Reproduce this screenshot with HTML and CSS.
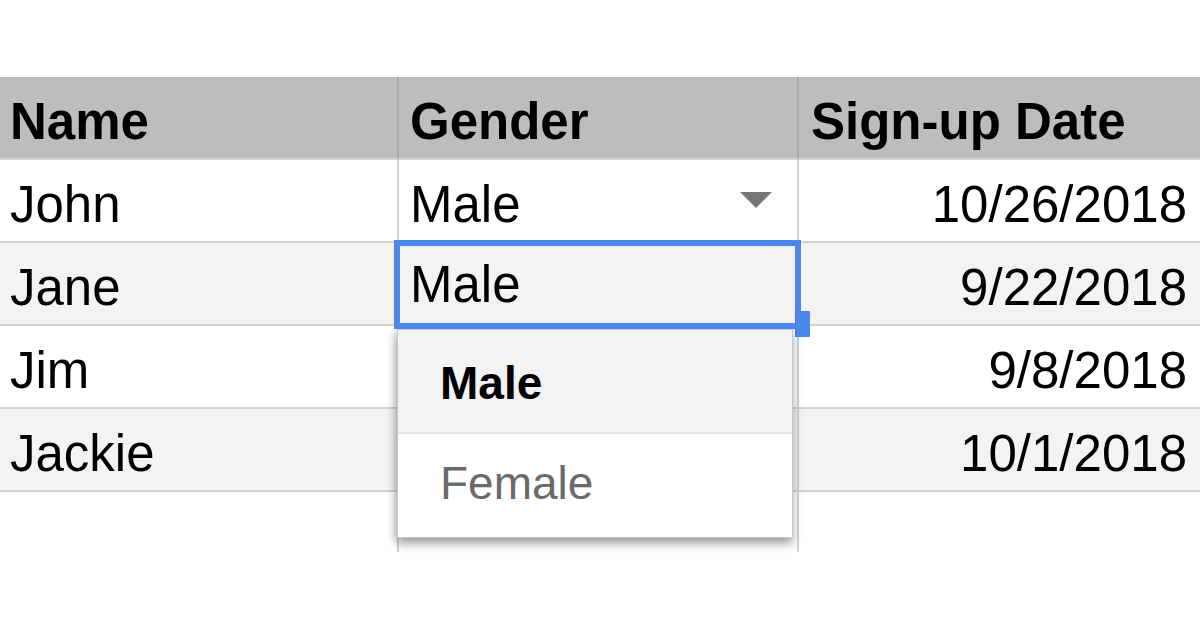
FILE: index.html
```html
<!DOCTYPE html>
<html>
<head>
<meta charset="utf-8">
<link rel="stylesheet" href="styles.css">
</head>
<body>
<div class="page">
  <div class="sheet">
    <div class="cell head c1">Name</div>
    <div class="cell head c2">Gender</div>
    <div class="cell head c3">Sign-up Date</div>

    <div class="cell c1">John</div>
    <div class="cell c2 dd"><span>Male</span><span class="arrow"></span></div>
    <div class="cell c3 num">10/26/2018</div>

    <div class="cell alt c1">Jane</div>
    <div class="cell alt c2 active">
      <div class="selection">Male<span class="handle"></span></div>
      <div class="menu">
        <div class="item current">Male</div>
        <div class="item muted">Female</div>
      </div>
    </div>
    <div class="cell alt c3 num">9/22/2018</div>

    <div class="cell c1">Jim</div>
    <div class="cell c2"></div>
    <div class="cell c3 num">9/8/2018</div>

    <div class="cell alt c1">Jackie</div>
    <div class="cell alt c2"></div>
    <div class="cell alt c3 num">10/1/2018</div>

    <div class="cell tail c1"></div>
    <div class="cell tail c2"></div>
    <div class="cell tail c3"></div>
  </div>
</div>
</body>
</html>
```

FILE: styles.css
```css
html, body {
  margin: 0;
  padding: 0;
  background: #ffffff;
}

body {
  font-family: "Liberation Sans", Arial, sans-serif;
  color: #000;
  width: 1200px;
  height: 630px;
  overflow: hidden;
}

.page {
  padding-top: 77px;
}

.sheet {
  display: grid;
  grid-template-columns: 399px 400px 401px;
}

.cell {
  box-sizing: border-box;
  height: 83px;
  padding-top: 9px;
  line-height: 72px;
  font-size: 51px;
  white-space: nowrap;
  border-right: 2px solid #d2d2d2;
  border-bottom: 2px solid #d2d2d2;
  background: #ffffff;
}

.cell.c1 { padding-left: 10px; }
.cell.c2 { padding-left: 11px; }
.cell.c3 { padding-left: 12px; border-right: none; }

.cell.num {
  text-align: right;
  padding-right: 13px;
}

.cell.head {
  background: #bdbdbd;
  font-weight: bold;
  border-right-color: #a9a9a9;
  border-bottom-color: #d4d4d4;
}

.cell.alt {
  background: #f3f3f3;
}

.cell.tail {
  height: 60px;
  border-bottom: none;
}

.cell.dd {
  display: flex;
  justify-content: space-between;
  align-items: flex-start;
  padding-right: 25px;
}

.arrow {
  width: 0;
  height: 0;
  margin-top: 23px;
  border-left: 16px solid transparent;
  border-right: 16px solid transparent;
  border-top: 16px solid #777777;
}

.active {
  position: relative;
}

.selection {
  position: absolute;
  left: -5px;
  top: -3px;
  right: -4px;
  bottom: -5px;
  border: 6px solid #4d87e9;
  background: #f3f3f3;
  padding: 9px 0 0 10px;
  line-height: normal;
  box-sizing: border-box;
  z-index: 3;
}

.handle {
  position: absolute;
  right: -15px;
  bottom: -14px;
  width: 15px;
  height: 26px;
  background: #4d87e9;
  box-sizing: border-box;
  border-left: 1px dotted #3d70c4;
}

.menu {
  position: absolute;
  left: -2px;
  top: 86px;
  width: 396px;
  background: #ffffff;
  border: 1px solid #c8c8c8;
  box-sizing: border-box;
  box-shadow: 0 6px 9px rgba(0, 0, 0, 0.3), -3px 2px 8px rgba(0, 0, 0, 0.14);
  z-index: 2;
  font-size: 46px;
}

.item {
  box-sizing: border-box;
  padding-left: 42px;
}

.item.current {
  height: 104px;
  padding-top: 4px;
  line-height: 99px;
  font-weight: bold;
  background: #f3f3f3;
  border-bottom: 2px solid #e4e4e4;
}

.item.muted {
  height: 103px;
  line-height: 98px;
  color: #6a6a6a;
}
```
